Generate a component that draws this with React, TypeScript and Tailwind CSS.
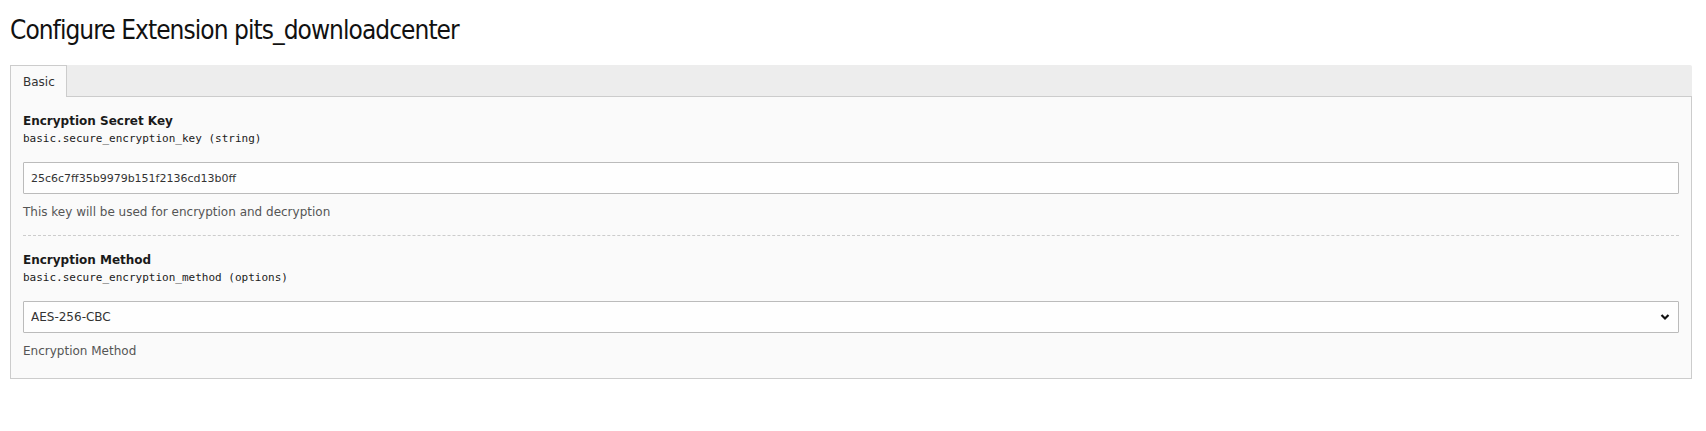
import React from 'react';

const body = { fontFamily: '"DejaVu Sans", Verdana, sans-serif' };
const mono = { fontFamily: '"DejaVu Sans Mono", "Liberation Mono", monospace' };

interface FieldProps {
  label: string;
  path: string;
  help: string;
  children: React.ReactNode;
}

function Field({ label, path, help, children }: FieldProps) {
  return (
    <div>
      <div className="text-[12px] leading-[18px] font-bold text-[#1a1a1a]">{label}</div>
      <div className="mt-px text-[11px] leading-[16px] text-[#1a1a1a]" style={mono}>
        {path}
      </div>
      <div className="mt-[15px]">{children}</div>
      <div className="mt-[9px] text-[12px] leading-[18px] text-[#555]">{help}</div>
    </div>
  );
}

export default function App() {
  return (
    <div className="min-h-[431px] bg-white pl-[10px] pr-[14px] pt-[14px]" style={body}>
      <h1
        className="text-[26px] leading-[32px] text-[#111] tracking-[-0.95px]"
        style={{ fontFamily: '"Liberation Sans Narrow", "DejaVu Sans Condensed", "Roboto", sans-serif' }}
      >
        Configure Extension pits_downloadcenter
      </h1>

      <div className="mt-[19px]">
        <div className="flex h-[32px] rounded-tr-[2px] border-b border-[#ccc] bg-[#ededed]">
          <div className="-mb-px flex w-[57px] items-center border border-b-0 border-[#ccc] bg-[#fafafa] pl-[12px] pt-px text-[12px] text-[#333]">
            Basic
          </div>
        </div>

        <div className="border border-t-0 border-[#ccc] bg-[#fafafa] px-[12px] pt-[15px] pb-[18px]">
          <Field
            label="Encryption Secret Key"
            path="basic.secure_encryption_key (string)"
            help="This key will be used for encryption and decryption"
          >
            <input
              className="block h-[32px] w-full rounded-[1px] border border-[#bbb] bg-[#fefefe] px-[7px] text-[11px] text-[#333] outline-none"
              defaultValue="25c6c7ff35b9979b151f2136cd13b0ff"
              style={body}
            />
          </Field>

          <div className="mt-[14px] mb-[15px] border-t border-dashed border-[#ccc]" />

          <Field
            label="Encryption Method"
            path="basic.secure_encryption_method (options)"
            help="Encryption Method"
          >
            <div className="relative">
              <select
                className="block h-[32px] w-full appearance-none rounded-[1px] border border-[#bbb] bg-[#fefefe] px-[7px] text-[12px] text-[#333] outline-none"
                defaultValue="AES-256-CBC"
                style={body}
              >
                <option>AES-256-CBC</option>
                <option>AES-128-CBC</option>
              </select>
              <svg
                className="pointer-events-none absolute right-[9px] top-[12px]"
                width="10"
                height="8"
                viewBox="0 0 10 8"
              >
                <path d="M1.5 2 L5 5.5 L8.5 2" fill="none" stroke="#111" strokeWidth="2.2" />
              </svg>
            </div>
          </Field>
        </div>
      </div>
    </div>
  );
}
